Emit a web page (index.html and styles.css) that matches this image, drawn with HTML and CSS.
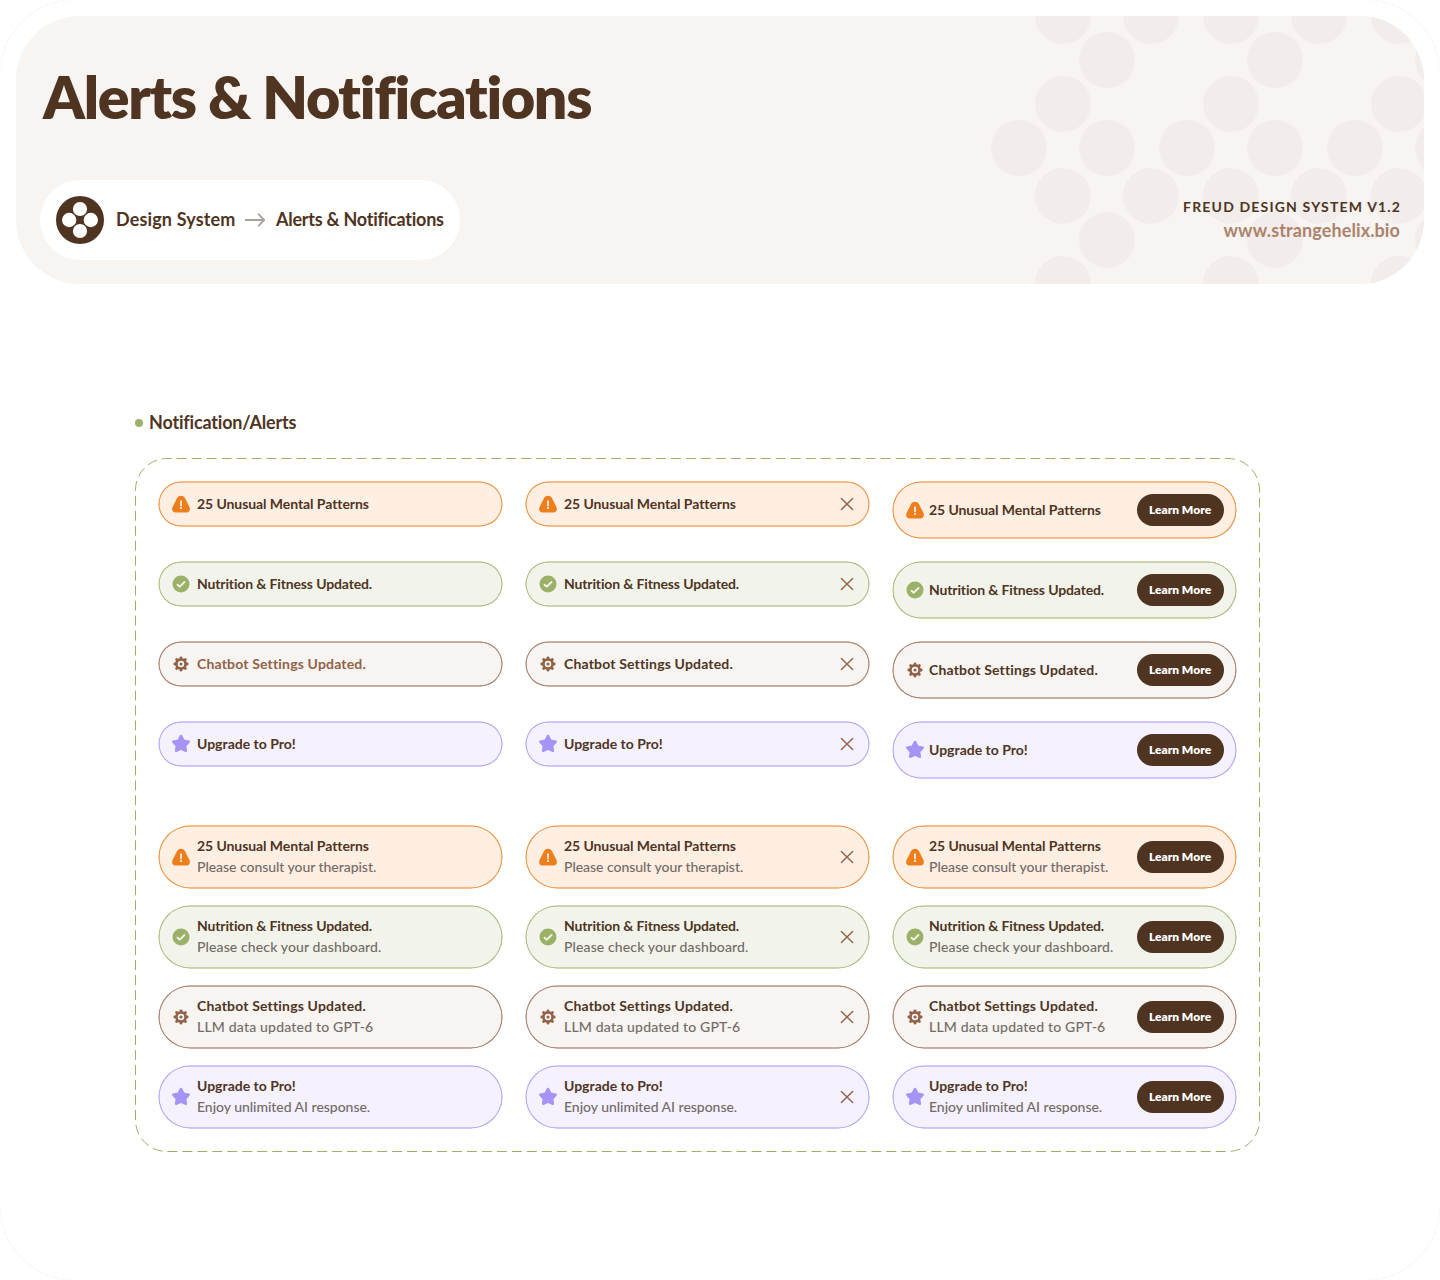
FILE: index.html
```html
<!DOCTYPE html>
<html lang="en">
<head>
<meta charset="utf-8">
<title>Alerts &amp; Notifications</title>
<link rel="stylesheet" href="styles.css">
</head>
<body>
<svg class="sprite" aria-hidden="true">
  <symbol id="warning" viewBox="0 0 20 20">
    <path fill="currentColor" d="M6.2 3.8C7.8 .9 12.2 .9 13.8 3.8L18.2 12.5C19.8 15.7 18.4 18.6 15.3 18.6H4.7C1.6 18.6 .2 15.7 1.8 12.5Z"/>
    <path class="cut" stroke-width="1.8" d="M10 6.4V12.2M10 13.1V15"/>
  </symbol>
  <symbol id="check" viewBox="0 0 20 20">
    <circle cx="10" cy="10" r="8.5" fill="currentColor"/>
    <path class="cut" stroke-width="1.8" stroke-linecap="round" stroke-linejoin="round" d="M6.5 10.7L8.8 12.7L13.5 8"/>
  </symbol>
  <symbol id="gear" viewBox="0 0 20 20">
    <circle cx="10" cy="10" r="5.9" fill="currentColor"/>
    <path stroke="currentColor" stroke-width="2.8" stroke-linecap="round" d="M10 3.8V16.2M3.8 10H16.2M5.6 5.6L14.4 14.4M14.4 5.6L5.6 14.4"/>
    <circle class="cut" cx="10" cy="10" r="2.4" stroke-width="1.7"/>
  </symbol>
  <symbol id="star" viewBox="0 0 20 20">
    <path fill="currentColor" stroke="currentColor" stroke-width="2.4" stroke-linejoin="round" d="M10 1.9L12.6 6.7L17.8 7.6L14.2 11.6L14.9 16.8L10 14.7L5.1 16.8L5.8 11.6L2.2 7.6L7.4 6.7Z"/>
  </symbol>
  <symbol id="close" viewBox="0 0 20 20">
    <path fill="none" stroke="currentColor" stroke-width="1.4" stroke-linecap="round" d="M4.4 4.4L15.6 15.6M15.6 4.4L4.4 15.6"/>
  </symbol>
</svg>

<div class="page">
  <header class="hero">
    <svg class="hero-pattern" viewBox="0 0 448 268" aria-hidden="true">
      <g>
        <circle cx="87" cy="0" r="28"/><circle cx="175" cy="0" r="28"/><circle cx="255" cy="0" r="28"/><circle cx="343" cy="0" r="28"/><circle cx="423" cy="0" r="28"/>
        <circle cx="131" cy="44" r="28"/><circle cx="299" cy="44" r="28"/><circle cx="467" cy="44" r="28"/>
        <circle cx="87" cy="88" r="28"/><circle cx="255" cy="88" r="28"/><circle cx="423" cy="88" r="28"/>
        <circle cx="43" cy="132" r="28"/><circle cx="131" cy="132" r="28"/><circle cx="211" cy="132" r="28"/><circle cx="299" cy="132" r="28"/><circle cx="379" cy="132" r="28"/><circle cx="467" cy="132" r="28"/>
        <circle cx="87" cy="180" r="28"/><circle cx="175" cy="180" r="28"/><circle cx="255" cy="180" r="28"/><circle cx="343" cy="180" r="28"/><circle cx="423" cy="180" r="28"/>
        <circle cx="131" cy="224" r="28"/><circle cx="299" cy="224" r="28"/><circle cx="467" cy="224" r="28"/>
        <circle cx="87" cy="268" r="28"/><circle cx="255" cy="268" r="28"/><circle cx="423" cy="268" r="28"/>
      </g>
    </svg>
    <h1>Alerts &amp; Notifications</h1>
    <div class="hero-row">
      <nav class="crumbs">
        <svg class="logo" viewBox="0 0 48 48" aria-hidden="true"><circle class="logo-disc" cx="24" cy="24" r="24"/><g fill="#fff"><circle cx="24" cy="13" r="7.1"/><circle cx="24" cy="35" r="7.1"/><circle cx="13.2" cy="24" r="7.2"/><circle cx="34.8" cy="24" r="7.2"/></g></svg>
        <span class="crumb crumb-root">Design System</span>
        <svg class="arrow" viewBox="0 0 20 16" aria-hidden="true"><path d="M0 8H19M13.2 1.8L19.2 8L13.2 14.2"/></svg>
        <span class="crumb crumb-current">Alerts &amp; Notifications</span>
      </nav>
      <div class="credit">
        <div class="credit-name">FREUD DESIGN SYSTEM V1.2</div>
        <div class="credit-url">www.strangehelix.bio</div>
      </div>
    </div>
  </header>

  <main>
    <h2><i class="dot"></i><span>Notification/Alerts</span></h2>
    <section class="panel">
      <svg class="panel-outline" aria-hidden="true"><rect x="0.5" y="0.5" width="1124" height="693" rx="31.5" pathLength="3585"/></svg>

      <div class="grid grid-single">
        <div class="alert warning"><svg class="icon"><use href="#warning"/></svg><div class="text"><b>25 Unusual Mental Patterns</b></div></div>
        <div class="alert warning"><svg class="icon"><use href="#warning"/></svg><div class="text"><b>25 Unusual Mental Patterns</b></div><svg class="close"><use href="#close"/></svg></div>
        <div class="alert warning has-action"><svg class="icon"><use href="#warning"/></svg><div class="text"><b>25 Unusual Mental Patterns</b></div><button>Learn More</button></div>

        <div class="alert success"><svg class="icon"><use href="#check"/></svg><div class="text"><b>Nutrition &amp; Fitness Updated.</b></div></div>
        <div class="alert success"><svg class="icon"><use href="#check"/></svg><div class="text"><b>Nutrition &amp; Fitness Updated.</b></div><svg class="close"><use href="#close"/></svg></div>
        <div class="alert success has-action"><svg class="icon"><use href="#check"/></svg><div class="text"><b>Nutrition &amp; Fitness Updated.</b></div><button>Learn More</button></div>

        <div class="alert neutral tinted"><svg class="icon"><use href="#gear"/></svg><div class="text"><b>Chatbot Settings Updated.</b></div></div>
        <div class="alert neutral"><svg class="icon"><use href="#gear"/></svg><div class="text"><b>Chatbot Settings Updated.</b></div><svg class="close"><use href="#close"/></svg></div>
        <div class="alert neutral has-action"><svg class="icon"><use href="#gear"/></svg><div class="text"><b>Chatbot Settings Updated.</b></div><button>Learn More</button></div>

        <div class="alert promo"><svg class="icon"><use href="#star"/></svg><div class="text"><b>Upgrade to Pro!</b></div></div>
        <div class="alert promo"><svg class="icon"><use href="#star"/></svg><div class="text"><b>Upgrade to Pro!</b></div><svg class="close"><use href="#close"/></svg></div>
        <div class="alert promo has-action"><svg class="icon"><use href="#star"/></svg><div class="text"><b>Upgrade to Pro!</b></div><button>Learn More</button></div>
      </div>

      <div class="grid grid-double">
        <div class="alert warning"><svg class="icon"><use href="#warning"/></svg><div class="text"><b>25 Unusual Mental Patterns</b><p>Please consult your therapist.</p></div></div>
        <div class="alert warning"><svg class="icon"><use href="#warning"/></svg><div class="text"><b>25 Unusual Mental Patterns</b><p>Please consult your therapist.</p></div><svg class="close"><use href="#close"/></svg></div>
        <div class="alert warning has-action"><svg class="icon"><use href="#warning"/></svg><div class="text"><b>25 Unusual Mental Patterns</b><p>Please consult your therapist.</p></div><button>Learn More</button></div>

        <div class="alert success"><svg class="icon"><use href="#check"/></svg><div class="text"><b>Nutrition &amp; Fitness Updated.</b><p>Please check your dashboard.</p></div></div>
        <div class="alert success"><svg class="icon"><use href="#check"/></svg><div class="text"><b>Nutrition &amp; Fitness Updated.</b><p>Please check your dashboard.</p></div><svg class="close"><use href="#close"/></svg></div>
        <div class="alert success has-action"><svg class="icon"><use href="#check"/></svg><div class="text"><b>Nutrition &amp; Fitness Updated.</b><p>Please check your dashboard.</p></div><button>Learn More</button></div>

        <div class="alert neutral"><svg class="icon"><use href="#gear"/></svg><div class="text"><b>Chatbot Settings Updated.</b><p>LLM data updated to GPT-6</p></div></div>
        <div class="alert neutral"><svg class="icon"><use href="#gear"/></svg><div class="text"><b>Chatbot Settings Updated.</b><p>LLM data updated to GPT-6</p></div><svg class="close"><use href="#close"/></svg></div>
        <div class="alert neutral has-action"><svg class="icon"><use href="#gear"/></svg><div class="text"><b>Chatbot Settings Updated.</b><p>LLM data updated to GPT-6</p></div><button>Learn More</button></div>

        <div class="alert promo"><svg class="icon"><use href="#star"/></svg><div class="text"><b>Upgrade to Pro!</b><p>Enjoy unlimited AI response.</p></div></div>
        <div class="alert promo"><svg class="icon"><use href="#star"/></svg><div class="text"><b>Upgrade to Pro!</b><p>Enjoy unlimited AI response.</p></div><svg class="close"><use href="#close"/></svg></div>
        <div class="alert promo has-action"><svg class="icon"><use href="#star"/></svg><div class="text"><b>Upgrade to Pro!</b><p>Enjoy unlimited AI response.</p></div><button>Learn More</button></div>
      </div>
    </section>
  </main>
</div>
</body>
</html>
```
FILE: styles.css
```css
* { box-sizing: border-box; margin: 0; padding: 0; }

:root {
  --brown-80: #4f3422;
  --brown-60: #926247;
  --brown-40: #ac836c;
  --green: #9bb168;
}

body {
  background: #fff;
  color: var(--brown-80);
  font-family: "Lato", "Open Sans", sans-serif;
  font-variant-ligatures: none;
}

.sprite { display: none; }

.page {
  width: 1440px;
  height: 1280px;
  padding: 16px;
  border-radius: 76px;
  background: #fff;
  box-shadow: 0 0 0 1px #f7f7f7;
  overflow: hidden;
}

/* Header */
.hero {
  position: relative;
  height: 268px;
  padding: 45px 24px 24px;
  border-radius: 64px;
  background: #f7f4f2;
  overflow: hidden;
}

.hero-pattern {
  position: absolute;
  top: 0;
  right: 0;
  width: 448px;
  height: 268px;
  fill: #f2edeb;
}

h1 {
  position: relative;
  padding-left: 3px;
  font-size: 59px;
  line-height: 72px;
  font-weight: 800;
  letter-spacing: -1.3px;
}

.hero-row {
  position: relative;
  display: flex;
  align-items: center;
  justify-content: space-between;
  margin-top: 47px;
}

.crumbs {
  display: flex;
  align-items: center;
  width: 420px;
  height: 80px;
  padding: 16px;
  border-radius: 40px;
  background: #fff;
}

.logo { width: 48px; height: 48px; margin-right: 12px; }
.logo-disc { fill: var(--brown-80); }

.crumb {
  padding-bottom: 3px;
  font-size: 18px;
  line-height: 24px;
  font-weight: 700;
  white-space: nowrap;
}

.crumb-root { width: 119px; letter-spacing: 0.14px; }
.crumb-current { letter-spacing: -0.24px; }

.arrow {
  width: 20px;
  height: 16px;
  margin: 0 11px 0 10px;
  fill: none;
  stroke: #a8a29e;
  stroke-width: 1.8;
}

.credit { text-align: right; }

.credit-name {
  margin-right: -1.17px;
  padding-top: 1px;
  font-size: 14px;
  line-height: 20px;
  font-weight: 700;
  letter-spacing: 1.17px;
}

.credit-url {
  margin-top: -1px;
  color: var(--brown-40);
  font-size: 18px;
  line-height: 28px;
  font-weight: 700;
  letter-spacing: 0.11px;
}

/* Section */
main { padding: 126px 0 0 119px; }

h2 {
  display: flex;
  align-items: center;
  gap: 6px;
  height: 24px;
  font-size: 18px;
  line-height: 24px;
  font-weight: 700;
  letter-spacing: -0.18px;
}

.dot {
  width: 8px;
  height: 8px;
  margin-top: 2px;
  border-radius: 50%;
  background: var(--green);
}

.panel {
  position: relative;
  width: 1125px;
  height: 694px;
  margin-top: 24px;
  padding: 24px;
}

.panel-outline {
  position: absolute;
  inset: 0;
  width: 1125px;
  height: 694px;
  fill: none;
  stroke: var(--green);
  stroke-width: 1;
  stroke-dasharray: 10 5;
  stroke-dashoffset: 5.3;
}

.grid {
  position: relative;
  display: grid;
  grid-template-columns: repeat(3, 343px);
  column-gap: 24px;
  align-items: start;
}

.grid-single { grid-auto-rows: 80px; }
.grid-double { grid-auto-rows: 62px; row-gap: 18px; margin-top: 24px; }

/* Alerts: the outline straddles the edge of the pill */
.alert {
  display: flex;
  align-items: center;
  gap: 6px;
  height: 44px;
  padding: 0 12px;
  border-radius: 31px;
  background: var(--fill);
  box-shadow: 0 0 0 0.5px var(--line), inset 0 0 0 0.5px var(--line);
}

.has-action { height: 56px; gap: 4px; }
.grid-double .alert { height: 62px; }

.warning { --line: #ed7e1c; --fill: #ffeee2; --title-track: -0.07px; --body-track: -0.04px; }
.success { --line: #9bb168; --fill: #f2f4eb; --title-track: -0.14px; --body-track: 0.12px; }
.neutral { --line: #926247; --fill: #f7f4f2; --title-track: 0.17px; --body-track: 0.19px; }
.promo { --line: #a694f5; --fill: #f5f1ff; --title-track: 0; --body-track: -0.03px; }

.icon { flex: none; width: 20px; height: 20px; color: var(--line); }
.cut { fill: none; stroke: var(--fill); }

.text {
  flex: 1;
  padding-bottom: 2px;
  font-size: 14px;
  line-height: 21px;
  white-space: nowrap;
}

.text b { display: block; font-weight: 700; letter-spacing: var(--title-track); }
.text p { color: #736b66; font-weight: 500; letter-spacing: var(--body-track); }
.tinted b { color: var(--brown-60); }

.close { flex: none; width: 20px; height: 20px; color: var(--brown-60); }

button {
  flex: none;
  width: 87px;
  height: 32px;
  padding-right: 1px;
  border: 0;
  border-radius: 16px;
  background: var(--brown-80);
  color: #fff;
  font: 800 12px/32px "Lato", "Open Sans", sans-serif;
}
```
